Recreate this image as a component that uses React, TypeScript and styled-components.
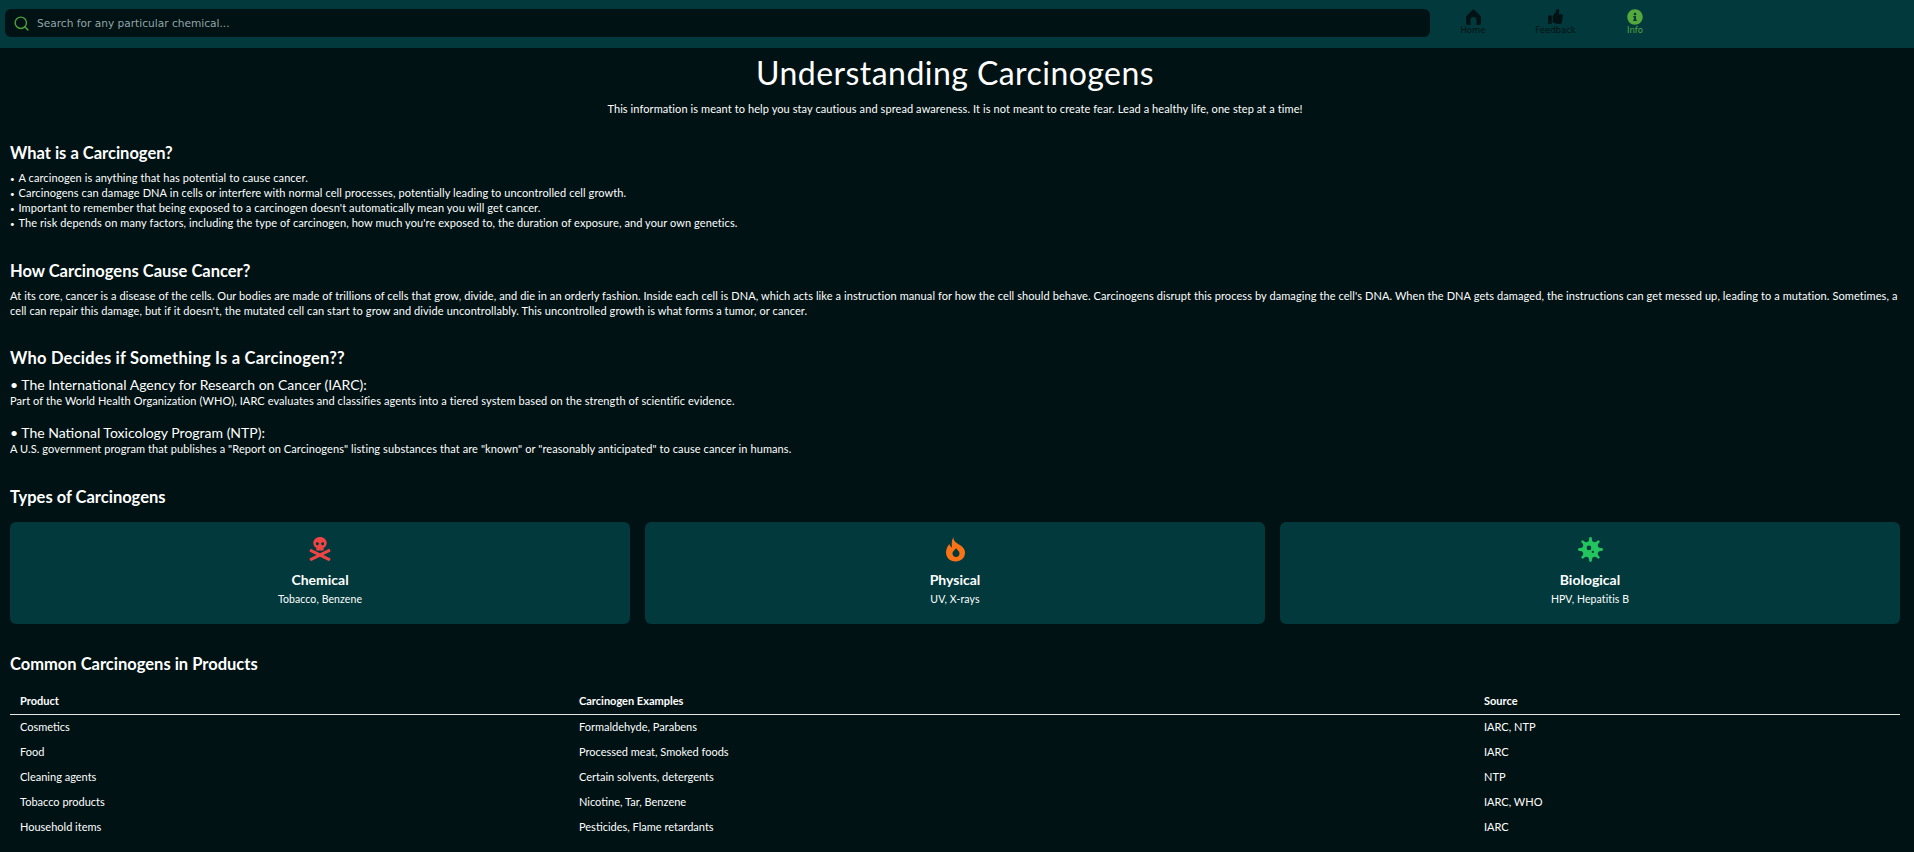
import { createGlobalStyle, styled } from 'styled-components';
import { FaInfoCircle, FaSkullCrossbones, FaThumbsUp, FaVirus } from 'react-icons/fa';
import { FiSearch } from 'react-icons/fi';
import type { ReactNode } from 'react';

const GlobalStyle = createGlobalStyle`
  * {
    box-sizing: border-box;
  }

  body {
    margin: 0;
    background-color: #001214;
    color: #fff;
    font-family: 'Lato', sans-serif;
    overflow: hidden;
  }
`;

const Header = styled.header`
  height: 48px;
  padding: 9px 0 11px 5px;
  display: flex;
  background-color: #01393c;
`;

const SearchBar = styled.div`
  width: 1425px;
  height: 28px;
  padding-left: 8px;
  display: flex;
  align-items: center;
  gap: 7px;
  flex-shrink: 0;
  background-color: #001214;
  border-radius: 6px;
  color: #4e9f3d;
`;

const Placeholder = styled.span`
  font-family: 'DejaVu Sans', sans-serif;
  font-size: 10.6px;
  color: #95a5a6;
`;

const Nav = styled.nav`
  display: flex;
  align-items: flex-start;
`;

const NavItem = styled.div<{ $active?: boolean; $width: number }>`
  width: ${({ $width }) => $width}px;
  display: flex;
  flex-direction: column;
  align-items: center;
  color: ${({ $active }) => ($active ? '#55a83c' : '#001214')};
  font-family: 'DejaVu Sans', sans-serif;
  font-size: 8.5px;
  line-height: 11px;
`;

const NavIcon = styled.div`
  height: 16px;
  display: flex;
  align-items: flex-start;
`;

const Main = styled.main`
  padding: 0 14px 0 10px;
`;

const Title = styled.h1`
  margin: 5px 0 0;
  font-size: 32px;
  line-height: 40px;
  font-weight: 400;
  letter-spacing: 0.45px;
  text-align: center;
`;

const Subtitle = styled.p`
  margin: 8px 0 0;
  font-size: 11px;
  line-height: 15px;
  letter-spacing: 0.09px;
  text-align: center;
`;

const Heading = styled.h2<{ $top: number; $tracking?: number }>`
  margin: ${({ $top }) => $top}px 0 0;
  font-size: 16.5px;
  line-height: 22px;
  font-weight: 700;
  letter-spacing: ${({ $tracking }) => $tracking ?? 0}px;
`;

const Body = styled.div<{ $top: number }>`
  margin-top: ${({ $top }) => $top}px;
  font-size: 11px;
  line-height: 15px;
  letter-spacing: 0.09px;
`;

const Bullet = styled.span`
  display: inline-block;
  width: 8.5px;
  font-size: 8px;
  line-height: 0;
`;

const SubHeading = styled.div<{ $top: number }>`
  margin-top: ${({ $top }) => $top}px;
  font-size: 14px;
  line-height: 17px;
`;

const Cards = styled.div`
  margin-top: 14px;
  display: grid;
  grid-template-columns: repeat(3, 1fr);
  gap: 15px;
`;

const Card = styled.div`
  height: 102px;
  padding-top: 15px;
  display: flex;
  flex-direction: column;
  align-items: center;
  background-color: #01393c;
  border-radius: 6px;
`;

const CardIcon = styled.div<{ $color: string }>`
  height: 25px;
  display: flex;
  color: ${({ $color }) => $color};
`;

const CardTitle = styled.div`
  margin-top: 9px;
  font-size: 14px;
  line-height: 18px;
  font-weight: 700;
`;

const CardText = styled.div`
  margin-top: 3px;
  font-size: 10.5px;
  line-height: 14px;
  letter-spacing: 0.1px;
`;

const Table = styled.table`
  width: 100%;
  margin-top: 13px;
  border-collapse: collapse;
  table-layout: fixed;
  font-size: 11px;
`;

const Th = styled.th<{ $width: string }>`
  width: ${({ $width }) => $width};
  height: 26px;
  padding: 0 10px;
  border-bottom: 1px solid #e5e5e5;
  text-align: left;
  font-weight: 700;
`;

const Td = styled.td`
  height: 25px;
  padding: 0 10px;
`;

const HomeIcon = () => (
  <svg width="15" height="16" viewBox="0 0 15 16" fill="currentColor">
    <path d="M7.5 0 15 7.5V14a2 2 0 0 1-2 2h-2.5v-5a3 3 0 0 0-6 0v5H2a2 2 0 0 1-2-2V7.5Z" />
  </svg>
);

const FlameIcon = () => (
  <svg width="19" height="25" viewBox="0 0 19 25" fill="currentColor" fillRule="evenodd">
    <path d="M7.5 0C7 4 10 5.500 13 7.500c3.500 2 6 4.500 6 8 0 5.500-4 9-9.500 9S0 20.500 0 15.500C0 12 1.500 9 3.500 7c.5 2 1.300 3 2.500 3.500C5.500 7 5.500 3 7.500 0ZM10 11c-.5 1.800-3.500 3-3.500 5.500 0 2 1.500 3.500 3.500 3.500s3.500-1.500 3.500-3.500c0-2.500-2.700-3.700-3.500-5.500Z" />
  </svg>
);

const products = [
  ['Cosmetics', 'Formaldehyde, Parabens', 'IARC, NTP'],
  ['Food', 'Processed meat, Smoked foods', 'IARC'],
  ['Cleaning agents', 'Certain solvents, detergents', 'NTP'],
  ['Tobacco products', 'Nicotine, Tar, Benzene', 'IARC, WHO'],
  ['Household items', 'Pesticides, Flame retardants', 'IARC'],
];

const types: { title: string; text: string; color: string; icon: ReactNode }[] = [
  { title: 'Chemical', text: 'Tobacco, Benzene', color: '#ef4444', icon: <FaSkullCrossbones size={24} /> },
  { title: 'Physical', text: 'UV, X-rays', color: '#f97316', icon: <FlameIcon /> },
  { title: 'Biological', text: 'HPV, Hepatitis B', color: '#22c55e', icon: <FaVirus size={25} /> },
];

const facts = [
  'A carcinogen is anything that has potential to cause cancer.',
  'Carcinogens can damage DNA in cells or interfere with normal cell processes, potentially leading to uncontrolled cell growth.',
  "Important to remember that being exposed to a carcinogen doesn't automatically mean you will get cancer.",
  "The risk depends on many factors, including the type of carcinogen, how much you're exposed to, the duration of exposure, and your own genetics.",
];

export default function App() {
  return (
    <>
      <GlobalStyle />
      <Header>
        <SearchBar>
          <FiSearch size={17} />
          <Placeholder>Search for any particular chemical...</Placeholder>
        </SearchBar>
        <Nav>
          <NavItem $width={86}>
            <NavIcon>
              <HomeIcon />
            </NavIcon>
            Home
          </NavItem>
          <NavItem $width={79}>
            <NavIcon>
              <FaThumbsUp size={15} />
            </NavIcon>
            Feedback
          </NavItem>
          <NavItem $width={80} $active>
            <NavIcon>
              <FaInfoCircle size={16} />
            </NavIcon>
            Info
          </NavItem>
        </Nav>
      </Header>
      <Main>
        <Title>Understanding Carcinogens</Title>
        <Subtitle>
          This information is meant to help you stay cautious and spread awareness. It is not meant to
          create fear. Lead a healthy life, one step at a time!
        </Subtitle>

        <Heading $top={26}>What is a Carcinogen?</Heading>
        <Body $top={6}>
          {facts.map((fact) => (
            <div key={fact}>
              <Bullet>•</Bullet>
              {fact}
            </div>
          ))}
        </Body>

        <Heading $top={30}>How Carcinogens Cause Cancer?</Heading>
        <Body $top={6}>
          At its core, cancer is a disease of the cells. Our bodies are made of trillions of cells that
          grow, divide, and die in an orderly fashion. Inside each cell is DNA, which acts like a
          instruction manual for how the cell should behave. Carcinogens disrupt this process by damaging
          the cell's DNA. When the DNA gets damaged, the instructions can get messed up, leading to a
          mutation. Sometimes, a cell can repair this damage, but if it doesn't, the mutated cell can start
          to grow and divide uncontrollably. This uncontrolled growth is what forms a tumor, or cancer.
        </Body>

        <Heading $top={29} $tracking={0.23}>
          Who Decides if Something Is a Carcinogen??
        </Heading>
        <SubHeading $top={7}>• The International Agency for Research on Cancer (IARC):</SubHeading>
        <Body $top={0}>
          Part of the World Health Organization (WHO), IARC evaluates and classifies agents into a tiered
          system based on the strength of scientific evidence.
        </Body>
        <SubHeading $top={16}>• The National Toxicology Program (NTP):</SubHeading>
        <Body $top={0}>
          A U.S. government program that publishes a "Report on Carcinogens" listing substances that are
          "known" or "reasonably anticipated" to cause cancer in humans.
        </Body>

        <Heading $top={30}>Types of Carcinogens</Heading>
        <Cards>
          {types.map((type) => (
            <Card key={type.title}>
              <CardIcon $color={type.color}>{type.icon}</CardIcon>
              <CardTitle>{type.title}</CardTitle>
              <CardText>{type.text}</CardText>
            </Card>
          ))}
        </Cards>

        <Heading $top={29}>Common Carcinogens in Products</Heading>
        <Table>
          <thead>
            <tr>
              <Th $width="559px">Product</Th>
              <Th $width="905px">Carcinogen Examples</Th>
              <Th $width="426px">Source</Th>
            </tr>
          </thead>
          <tbody>
            {products.map((row) => (
              <tr key={row[0]}>
                {row.map((cell) => (
                  <Td key={cell}>{cell}</Td>
                ))}
              </tr>
            ))}
          </tbody>
        </Table>
      </Main>
    </>
  );
}
